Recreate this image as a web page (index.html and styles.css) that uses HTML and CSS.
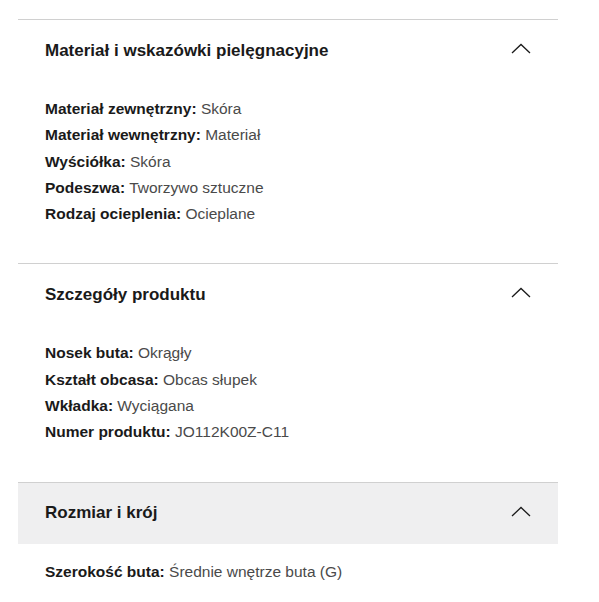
FILE: index.html
```html
<!DOCTYPE html>
<html lang="pl">
<head>
<meta charset="utf-8">
<link rel="stylesheet" href="styles.css">
</head>
<body>
<div class="accordion">
  <section class="item">
    <div class="head">
      <h2 class="title">Materiał i wskazówki pielęgnacyjne</h2>
      <svg class="chev" width="20" height="11" viewBox="0 0 20 11"><path d="M1 10 L10 1.5 L19 10" fill="none" stroke="#1a1a1a" stroke-width="1.3"/></svg>
    </div>
    <div class="body">
      <p class="row"><b>Materiał zewnętrzny:</b> Skóra</p>
      <p class="row"><b>Materiał wewnętrzny:</b> Materiał</p>
      <p class="row"><b>Wyściółka:</b> Skóra</p>
      <p class="row"><b>Podeszwa:</b> Tworzywo sztuczne</p>
      <p class="row"><b>Rodzaj ocieplenia:</b> Ocieplane</p>
    </div>
  </section>
  <section class="item">
    <div class="head">
      <h2 class="title">Szczegóły produktu</h2>
      <svg class="chev" width="20" height="11" viewBox="0 0 20 11"><path d="M1 10 L10 1.5 L19 10" fill="none" stroke="#1a1a1a" stroke-width="1.3"/></svg>
    </div>
    <div class="body">
      <p class="row"><b>Nosek buta:</b> Okrągły</p>
      <p class="row"><b>Kształt obcasa:</b> Obcas słupek</p>
      <p class="row"><b>Wkładka:</b> Wyciągana</p>
      <p class="row"><b>Numer produktu:</b> JO112K00Z-C11</p>
    </div>
  </section>
  <section class="item">
    <div class="head active">
      <h2 class="title">Rozmiar i krój</h2>
      <svg class="chev" width="20" height="11" viewBox="0 0 20 11"><path d="M1 10 L10 1.5 L19 10" fill="none" stroke="#1a1a1a" stroke-width="1.3"/></svg>
    </div>
    <div class="body">
      <p class="row"><b>Szerokość buta:</b> Średnie wnętrze buta (G)</p>
    </div>
  </section>
</div>
</body>
</html>
```
FILE: styles.css
```css
html, body {
  margin: 0;
  padding: 0;
  background: #ffffff;
}
body {
  font-family: "Liberation Sans", Arial, sans-serif;
  color: #1a1a1a;
}
.accordion {
  width: 540px;
  margin-left: 18px;
  padding-top: 19px;
}
.item {
  border-top: 1px solid #d0d0d0;
}
.head {
  height: 61px;
  display: flex;
  align-items: center;
  justify-content: space-between;
  padding: 0 27px 0 27px;
}
.head.active {
  background: #efeff0;
}
.title {
  margin: 0;
  font-size: 17px;
  font-weight: 700;
  color: #1a1a1a;
}
.chev {
  display: block;
  margin-top: -4px;
}
.body {
  padding: 15px 27px 36px;
}
.row {
  margin: 0;
  font-size: 15.5px;
  line-height: 26.3px;
  color: #4a4a4a;
}
.row b {
  color: #1a1a1a;
  font-weight: 700;
}
```
